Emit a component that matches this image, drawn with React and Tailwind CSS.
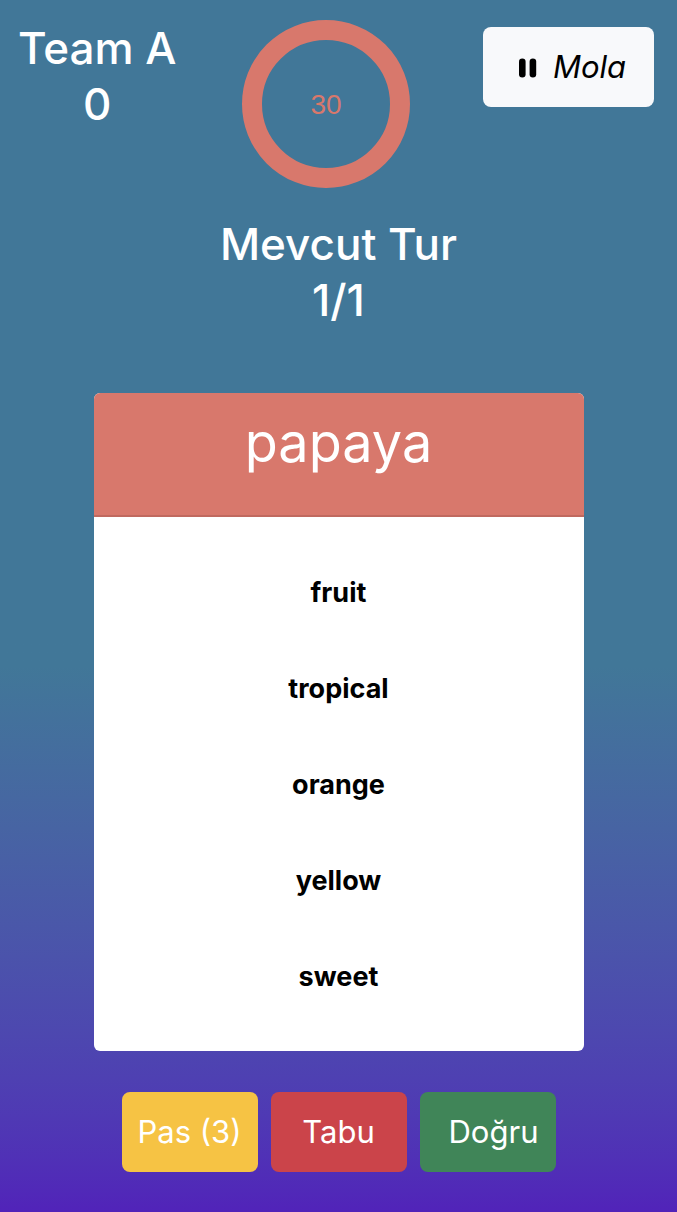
const forbiddenWords = ["fruit", "tropical", "orange", "yellow", "sweet"];

function Timer({ seconds }) {
  return (
    <div role="timer" aria-label="Timer" className="mr-2 w-[168px] shrink-0">
      <svg viewBox="0 0 168 168" className="block w-full">
        <circle cx="84" cy="84" r="74" fill="none" stroke="#d8786c" strokeWidth="20" />
        <text
          x="84"
          y="94"
          textAnchor="middle"
          className="fill-[#d8786c] font-['Liberation_Sans',sans-serif] text-[28px]"
        >
          {seconds}
        </text>
      </svg>
    </div>
  );
}

function PauseIcon() {
  return (
    <svg viewBox="0 0 18 20" className="h-5 w-[18px]" fill="currentColor" aria-hidden="true">
      <rect x="0" y="0.5" width="6.6" height="19" rx="3.3" />
      <rect x="10.6" y="0.5" width="6.6" height="19" rx="3.3" />
    </svg>
  );
}

export default function App() {
  return (
    <div className="min-h-screen bg-linear-to-b from-[#417798] from-55% to-[#5123b9] pb-10 font-[Inter,sans-serif] text-white">
      <header className="flex items-start justify-between pt-5 pr-[23px] pl-[18px]">
        <div className="text-center text-[44px] leading-14 font-medium">
          <h2>Team A</h2>
          <p>0</p>
        </div>
        <Timer seconds={30} />
        <button
          type="button"
          className="mt-[7px] flex h-20 w-[171px] items-center justify-center gap-4 rounded-lg bg-[#f8f9fb] pt-px pl-2 text-[31px] text-black italic"
        >
          <PauseIcon />
          Mola
        </button>
      </header>

      <section className="mt-7 text-center text-[44px] leading-14 font-medium">
        <h2>Mevcut Tur</h2>
        <p>1/1</p>
      </section>

      <main className="mx-auto mt-[65px] max-w-[490px] overflow-hidden rounded-md bg-white text-center">
        <h1 className="border-b-2 border-[#c0695f] bg-[#d8786c] pt-4 pb-[38px] text-[54px] leading-[68px]">
          papaya
        </h1>
        <ul className="flex flex-col gap-14 pt-14 pb-[54px] text-[27px] leading-10 font-bold text-black">
          {forbiddenWords.map((word) => (
            <li key={word}>{word}</li>
          ))}
        </ul>
      </main>

      <div className="mt-[41px] flex justify-center gap-[13px] text-[31px]">
        <button type="button" className="h-20 w-[136px] rounded-lg bg-[#f6c344] pt-px">
          Pas (3)
        </button>
        <button type="button" className="h-20 w-[136px] rounded-lg bg-[#cb444a] pt-px">
          Tabu
        </button>
        <button type="button" className="h-20 w-[136px] rounded-lg bg-[#408558] pt-px pl-3">
          Doğru
        </button>
      </div>
    </div>
  );
}
